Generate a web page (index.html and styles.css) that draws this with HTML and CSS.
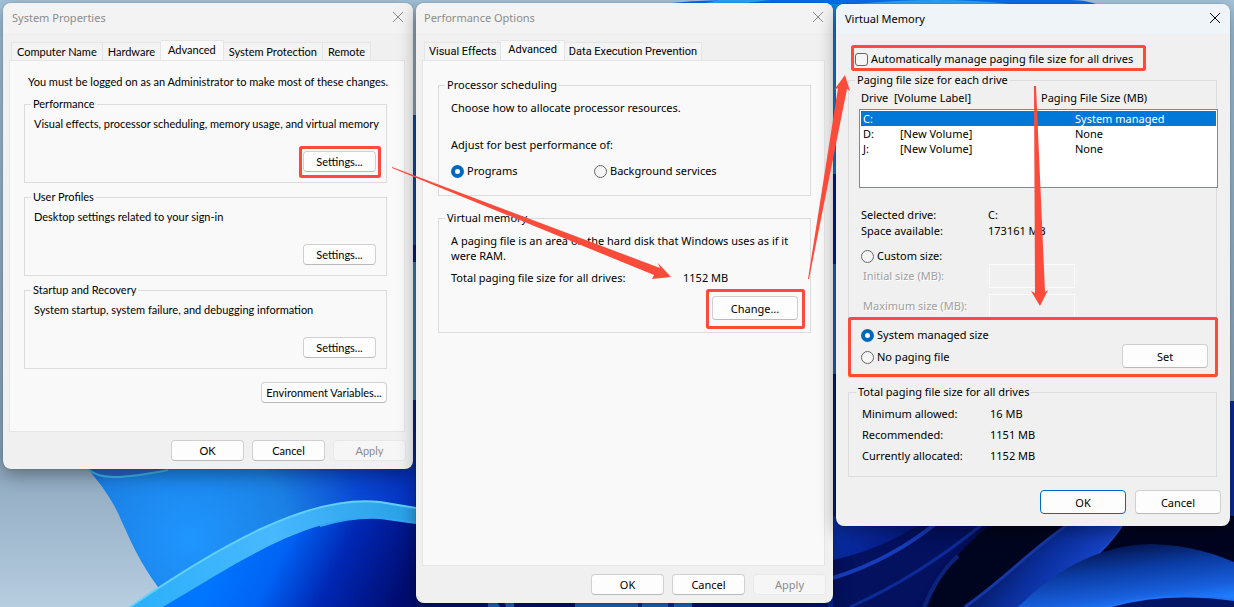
FILE: index.html
```html
<!DOCTYPE html>
<html lang="en">
<head>
<meta charset="utf-8">
<title>Virtual Memory</title>
<link rel="stylesheet" href="styles.css">
</head>
<body>
<div class="desktop">
	<svg class="wallpaper" viewBox="0 0 1234 607" preserveAspectRatio="none" aria-hidden="true">
		<defs>
			<linearGradient id="sky" x1="0" y1="0" x2="0" y2="1">
				<stop offset="0" stop-color="#a3c3da"/>
				<stop offset="0.75" stop-color="#8ba6bd"/>
				<stop offset="1" stop-color="#b7cde0"/>
			</linearGradient>
			<radialGradient id="petal" gradientUnits="userSpaceOnUse" cx="190" cy="540" r="250">
				<stop offset="0" stop-color="#1f96ff"/>
				<stop offset="0.4" stop-color="#1b80e4"/>
				<stop offset="0.7" stop-color="#0948d4"/>
				<stop offset="1" stop-color="#0527b4"/>
			</radialGradient>
			<linearGradient id="inner" gradientUnits="userSpaceOnUse" x1="230" y1="540" x2="390" y2="620">
				<stop offset="0" stop-color="#0076ff"/>
				<stop offset="0.3" stop-color="#0062f4"/>
				<stop offset="0.6" stop-color="#0028b4"/>
				<stop offset="1" stop-color="#000c70"/>
			</linearGradient>
			<linearGradient id="rim" gradientUnits="userSpaceOnUse" x1="140" y1="600" x2="415" y2="510">
				<stop offset="0" stop-color="#2cb0fa"/>
				<stop offset="0.5" stop-color="#48b8ff"/>
				<stop offset="1" stop-color="#28a0e6"/>
			</linearGradient>
			<linearGradient id="night" gradientUnits="userSpaceOnUse" x1="833" y1="500" x2="1000" y2="607">
				<stop offset="0" stop-color="#0b37b8"/>
				<stop offset="0.5" stop-color="#041478"/>
				<stop offset="1" stop-color="#00041f"/>
			</linearGradient>
			<linearGradient id="fold" gradientUnits="userSpaceOnUse" x1="980" y1="540" x2="1060" y2="607">
				<stop offset="0" stop-color="#000832"/>
				<stop offset="0.6" stop-color="#0a2f9e"/>
				<stop offset="1" stop-color="#1744c8"/>
			</linearGradient>
			<linearGradient id="glow" gradientUnits="userSpaceOnUse" x1="1130" y1="544" x2="1138" y2="607">
				<stop offset="0" stop-color="#04154f"/>
				<stop offset="0.4" stop-color="#0b3da6"/>
				<stop offset="0.8" stop-color="#175fdc"/>
				<stop offset="1" stop-color="#1f7bff"/>
			</linearGradient>
		</defs>
		<rect width="1234" height="607" fill="url(#sky)"/>
		<path d="M88 469C103 487 110 497 118 513C130 540 140 563 158 587L200 607H430V115H400V469Z" fill="url(#petal)"/>
		<path d="M88 469C98 479 118 480 168 470V460H88Z" fill="#2765c8"/>
		<path d="M88 469C98 479 118 480 168 470" fill="none" stroke="#3db6e6" stroke-width="2"/>
		<path d="M130 607C220 545 310 494 380 502L416 508V607Z" fill="url(#rim)"/>
		<path d="M130 607C220 545 310 494 380 502L416 508" fill="none" stroke="#62d0fa" stroke-width="2"/>
		<path d="M163 607C250 555 310 515 380 518L416 523V607Z" fill="url(#inner)"/>
		<path d="M320 526C340 520 360 517 380 518L416 523" fill="none" stroke="#35a5f5" stroke-width="2"/>
		<path d="M408 115H420V310H408Z" fill="#0b57cc"/>
		<path d="M408 245H420V262H408Z" fill="#0520a0"/>
		<path d="M408 262H420V400H408Z" fill="#3b93cf"/>
		<path d="M665 4C690 0 730 0 760 0H1070C1085 0 1095 3 1100 6V12H665Z" fill="#0a6fee"/>
		<path d="M700 4L720 0H770L740 4ZM855 4Q940 -4 1010 4Z" fill="#2aa4fb"/>
		<rect x="826" y="4" width="14" height="170" fill="#1489e8"/>
		<rect x="826" y="174" width="14" height="90" fill="#0524a2"/>
		<rect x="826" y="264" width="14" height="110" fill="#2273cb"/>
		<rect x="826" y="374" width="14" height="150" fill="#061f83"/>
		<rect x="1228" y="401" width="6" height="140" fill="#0d2a94"/>
		<rect x="416" y="598" width="420" height="9" fill="#00127a"/>
		<path d="M488 607V600H496L500 607ZM506 607L504 600H514V607ZM575 607V600H692V607Z" fill="#1c6fce"/>
		<path d="M638 607V600H642V607ZM668 607V600H674V607Z" fill="#062da0"/>
		<rect x="828" y="516" width="406" height="91" fill="url(#night)"/>
		<path d="M833 560C880 550 910 530 935 516L985 520C950 555 930 575 915 607H833Z" fill="#03115f"/>
		<path d="M833 578C875 565 910 545 940 520" fill="none" stroke="#173cba" stroke-width="4"/>
		<path d="M850 607C900 585 945 555 985 522" fill="none" stroke="#0c2b96" stroke-width="3"/>
		<path d="M928 607C940 570 965 545 1000 516H1080C1030 555 1000 580 960 607Z" fill="#00051f"/>
		<path d="M924 607C932 588 942 570 958 556" fill="none" stroke="#0b2378" stroke-width="4"/>
		<path d="M965 607C1010 575 1035 545 1075 520H1126C1110 545 1080 580 1018 607Z" fill="url(#fold)"/>
		<path d="M965 607C1010 575 1035 545 1075 520" fill="none" stroke="#1738a4" stroke-width="3"/>
		<path d="M1018 607C1080 580 1110 545 1126 520" fill="none" stroke="#1b49cc" stroke-width="2"/>
		<path d="M1018 607C1060 565 1105 545 1150 544C1185 545 1210 552 1234 562V607Z" fill="url(#glow)"/>
		<path d="M1108 607C1150 595 1190 594 1234 600V607Z" fill="#021665"/>
		<path d="M1108 607C1150 595 1190 594 1234 600" fill="none" stroke="#2272f5" stroke-width="2"/>
	</svg>

	<section class="window system" aria-label="System Properties">
		<header class="titlebar">
			<span>System Properties</span>
			<button class="close" aria-label="Close"><svg viewBox="0 0 14 14"><path d="M2 1L12 11M12 1L2 11"/></svg></button>
		</header>
		<nav class="tabs">
			<button class="tab">Computer Name</button>
			<button class="tab">Hardware</button>
			<button class="tab active">Advanced</button>
			<button class="tab">System Protection</button>
			<button class="tab">Remote</button>
		</nav>
		<div class="panel">
			<p class="note">You must be logged on as an Administrator to make most of these changes.</p>
			<fieldset class="group">
				<legend>Performance</legend>
				<p>Visual effects, processor scheduling, memory usage, and virtual memory</p>
				<button class="btn">Settings...</button>
			</fieldset>
			<fieldset class="group">
				<legend>User Profiles</legend>
				<p>Desktop settings related to your sign-in</p>
				<button class="btn">Settings...</button>
			</fieldset>
			<fieldset class="group">
				<legend>Startup and Recovery</legend>
				<p>System startup, system failure, and debugging information</p>
				<button class="btn">Settings...</button>
			</fieldset>
			<button class="btn env">Environment Variables...</button>
		</div>
		<footer class="actions">
			<button class="btn">OK</button>
			<button class="btn">Cancel</button>
			<button class="btn" disabled>Apply</button>
		</footer>
	</section>

	<section class="window performance" aria-label="Performance Options">
		<header class="titlebar">
			<span>Performance Options</span>
			<button class="close" aria-label="Close"><svg viewBox="0 0 14 14"><path d="M2 1L12 11M12 1L2 11"/></svg></button>
		</header>
		<nav class="tabs">
			<button class="tab">Visual Effects</button>
			<button class="tab active">Advanced</button>
			<button class="tab">Data Execution Prevention</button>
		</nav>
		<div class="panel">
			<fieldset class="group scheduling">
				<legend>Processor scheduling</legend>
				<p>Choose how to allocate processor resources.</p>
				<p class="adjust">Adjust for best performance of:</p>
				<div class="radios">
					<label class="choice"><input type="radio" name="adjust" checked>Programs</label>
					<label class="choice"><input type="radio" name="adjust">Background services</label>
				</div>
			</fieldset>
			<fieldset class="group memory">
				<legend>Virtual memory</legend>
				<p class="about">A paging file is an area on the hard disk that Windows uses as if it were RAM.</p>
				<p class="total"><span>Total paging file size for all drives:</span><span>1152 MB</span></p>
				<button class="btn big">Change...</button>
			</fieldset>
		</div>
		<footer class="actions">
			<button class="btn">OK</button>
			<button class="btn">Cancel</button>
			<button class="btn" disabled>Apply</button>
		</footer>
	</section>

	<section class="window virtual" aria-label="Virtual Memory">
		<header class="titlebar">
			<span>Virtual Memory</span>
			<button class="close" aria-label="Close"><svg viewBox="0 0 14 14"><path d="M2 1L12 11M12 1L2 11"/></svg></button>
		</header>
		<div class="content">
			<label class="choice auto"><input type="checkbox">Automatically manage paging file size for all drives</label>
			<fieldset class="group drives">
				<legend>Paging file size for each drive</legend>
				<div class="heads"><span>Drive</span><span>[Volume Label]</span><span>Paging File Size (MB)</span></div>
				<div class="list">
					<table>
						<tr class="selected"><td class="drive">C:</td><td class="volume"></td><td>System managed</td></tr>
						<tr><td class="drive">D:</td><td class="volume">[New Volume]</td><td>None</td></tr>
						<tr><td class="drive">J:</td><td class="volume">[New Volume]</td><td>None</td></tr>
					</table>
				</div>
				<dl class="info">
					<dt>Selected drive:</dt><dd>C:</dd>
					<dt>Space available:</dt><dd>173161 MB</dd>
				</dl>
				<label class="choice"><input type="radio" name="size">Custom size:</label>
				<div class="sizes">
					<label for="initial">Initial size (MB):</label><input id="initial" type="text" disabled>
					<label for="maximum">Maximum size (MB):</label><input id="maximum" type="text" disabled>
				</div>
				<div class="managed">
					<div class="stack">
						<label class="choice"><input type="radio" name="size" checked>System managed size</label>
						<label class="choice"><input type="radio" name="size">No paging file</label>
					</div>
					<button class="btn big">Set</button>
				</div>
			</fieldset>
			<fieldset class="group totals">
				<legend>Total paging file size for all drives</legend>
				<dl>
					<dt>Minimum allowed:</dt><dd>16 MB</dd>
					<dt>Recommended:</dt><dd>1151 MB</dd>
					<dt>Currently allocated:</dt><dd>1152 MB</dd>
				</dl>
			</fieldset>
			<div class="buttons">
				<button class="btn big default">OK</button>
				<button class="btn big">Cancel</button>
			</div>
		</div>
	</section>

	<!-- red boxes and arrows that show the click order -->
	<svg class="marks" width="1234" height="607" aria-hidden="true">
		<g class="boxes">
			<rect x="300.5" y="147.5" width="79" height="29" rx="1"/>
			<rect x="707.5" y="290.5" width="96" height="37" rx="1"/>
			<rect x="852.5" y="46.5" width="292" height="23" rx="1"/>
			<rect x="849.5" y="318.5" width="367" height="57" rx="1"/>
		</g>
		<path d="M392 167L660 268L658 263L671 277L652 279L654 275L392 168Z"/>
		<path d="M808 279L838 88L834 90L845 75L850 91L847 89L809 279Z"/>
		<path d="M1034 86L1036 86L1045 292L1048 290L1040 306L1031 291L1035 293Z"/>
	</svg>
</div>
</body>
</html>
```
FILE: styles.css
```css
* {
    box-sizing: border-box;
}
body {
    margin: 0;
    overflow: hidden;
    font-family: "Noto Sans", "Open Sans", sans-serif;
    font-size: 11px;
    line-height: 16px;
    color: #000;
}
p, dl, dd {
    margin: 0;
}
button, input {
    font: inherit;
    color: inherit;
}
.desktop {
    position: relative;
    min-height: 100vh;
    overflow: hidden;
}
.wallpaper {
    position: absolute;
    width: 100%;
    height: 100%;
}
.marks {
    position: absolute;
    left: 0;
    top: 0;
    fill: #fb4b3a;
    pointer-events: none;
}
.boxes {
    fill: none;
    stroke: #fb4b3a;
    stroke-width: 3;
}

/* windows */
.window {
    position: absolute;
    top: 3px;
    background: #f0f0f0;
    border-radius: 8px;
    box-shadow: 0 0 1px rgba(0, 0, 0, 0.5), 0 6px 18px rgba(0, 0, 0, 0.35);
}
.system {
    left: 3px;
    width: 410px;
    font-family: Lato, "Liberation Sans", sans-serif;
}
.performance {
    left: 416px;
    width: 417px;
}
.virtual {
    left: 836px;
    top: 4px;
    width: 394px;
}
.titlebar {
    display: flex;
    justify-content: space-between;
    align-items: center;
    height: 30px;
    padding: 0 8px 0 9px;
    border-radius: 8px 8px 0 0;
    background: #f3f3f3;
    color: #8c8c8c;
    font-family: "Noto Sans", "Open Sans", sans-serif;
}
.performance .titlebar {
    padding-left: 8px;
}
.virtual .titlebar {
    background: #eff4f9;
    color: #000;
}
.close {
    padding: 0;
    border: none;
    background: none;
}
.close svg {
    display: block;
    width: 14px;
    height: 14px;
    fill: none;
    stroke: currentColor;
    stroke-width: 1;
}

/* tabs */
.tabs {
    display: flex;
    align-items: flex-end;
    height: 27px;
    padding-left: 8px;
}
.performance .tabs {
    font-family: Roboto, "Liberation Sans", sans-serif;
}
.tab {
    height: 18px;
    padding: 0 5px;
    border: 1px solid #e5e5e5;
    border-width: 1px 1px 0 0;
    background: #f3f3f3;
    line-height: 16px;
    white-space: nowrap;
}
.tab:first-child {
    border-left-width: 1px;
}
.tab.active {
    height: 20px;
    padding: 0 7px 2px;
    background: #f9f9f9;
}
.performance .tab {
    padding: 0 4px;
}
.performance .tab.active {
    padding: 0 7px 2px;
}
.panel {
    margin: 0 8px 0 6px;
    border: 1px solid #e5e5e5;
    background: #f9f9f9;
}
.system .panel {
    min-height: 372px;
    padding: 13px 17px 13px 14px;
}
.performance .panel {
    min-height: 506px;
    padding: 16px 13px 16px 15px;
}
.note {
    padding-left: 4px;
    margin-bottom: 6px;
}
.group {
    display: flex;
    flex-direction: column;
    min-width: 0;
    margin: 0 0 6px;
    padding: 4px 10px 10px 9px;
    border: 1px solid #dcdcdc;
}
.group legend {
    margin-left: -3px;
    padding: 0 2px;
}
.system .group {
    height: 87px;
}
.system p {
    white-space: nowrap;
}
.group .btn {
    align-self: flex-end;
    margin-top: auto;
}
.btn {
    width: 73px;
    height: 21px;
    padding: 0;
    border: 1px solid #d0d0d0;
    border-bottom-color: #bababa;
    border-radius: 4px;
    background: #fdfdfd;
    line-height: 18px;
    white-space: nowrap;
}
.btn:disabled {
    border-color: #e8e8e8;
    background: #f6f6f6;
    color: #8b8b8b;
}
.btn.big {
    width: 86px;
    height: 24px;
    line-height: 21px;
}
.btn.default {
    border-color: #0067c0;
}
.btn.env {
    display: block;
    width: 126px;
    margin: 13px 0 0 auto;
}
.actions {
    display: flex;
    justify-content: flex-end;
    gap: 8px;
    padding: 8px 7px;
}

/* tick boxes and radios */
.choice {
    display: flex;
    align-items: center;
    gap: 3px;
}
.choice input {
    appearance: none;
    width: 13px;
    height: 13px;
    margin: 0;
    border: 1px solid #666;
    border-radius: 50%;
    background: #f5f5f5;
}
.choice input[type="checkbox"] {
    border-radius: 3px;
}
.choice input:checked {
    border: 4px solid #0067c0;
    background: #fff;
}

/* Performance Options */
.performance .group {
    padding-left: 12px;
}
.performance .group legend {
    margin-left: -6px;
}
.scheduling {
    height: 119px;
}
.scheduling p {
    margin-top: 3px;
}
.scheduling .adjust {
    margin-top: 21px;
}
.radios {
    display: grid;
    grid-template-columns: 143px 1fr;
    margin-top: 10px;
}
.performance .memory {
    height: 123px;
    margin-top: 14px;
    padding: 7px 12px 12px;
}
.about {
    line-height: 15px;
}
.total {
    display: grid;
    grid-template-columns: 232px 1fr;
    margin-top: 7px;
}

/* Virtual Memory */
.content {
    padding: 17px 9px 12px 12px;
}
.auto {
    margin-left: 7px;
}
.drives {
    margin-right: 4px;
    margin-top: 5px;
    padding: 2px 0 9px 12px;
}
.virtual .group legend {
    margin-left: -6px;
}
.heads {
    display: grid;
    grid-template-columns: 33px 147px 1fr;
}
.list {
    height: 79px;
    margin: 3px -2px 0;
    padding: 1px;
    border: 1px solid #828790;
    background: #fff;
}
.list table {
    width: 100%;
    border-collapse: collapse;
    line-height: 15px;
}
.list td {
    padding: 0;
}
.list .drive {
    width: 39px;
    padding-left: 2px;
}
.list .volume {
    width: 175px;
}
.selected {
    background: #0078d7;
    color: #fff;
}
.info {
    display: grid;
    grid-template-columns: 127px 1fr;
    margin: 19px 0 9px;
}
.sizes {
    display: grid;
    grid-template-columns: 126px 86px;
    align-items: center;
    row-gap: 6px;
    padding-left: 2px;
    color: #a0a0a0;
    text-shadow: 1px 1px #fff;
}
.sizes input {
    width: 86px;
    height: 24px;
    border: 1px solid #fafafa;
    background: #f0f0f0;
}
.managed {
    display: flex;
    justify-content: space-between;
    height: 41px;
    margin: 9px 8px 0 0;
}
.stack {
    display: grid;
    align-content: start;
    gap: 6px;
}
.totals {
    margin: 4px 4px 13px 0;
    padding: 6px 12px 12px 13px;
}
.totals dl {
    display: grid;
    grid-template-columns: 128px 1fr;
    row-gap: 5px;
}
.buttons {
    display: flex;
    justify-content: flex-end;
    gap: 9px;
}
```
